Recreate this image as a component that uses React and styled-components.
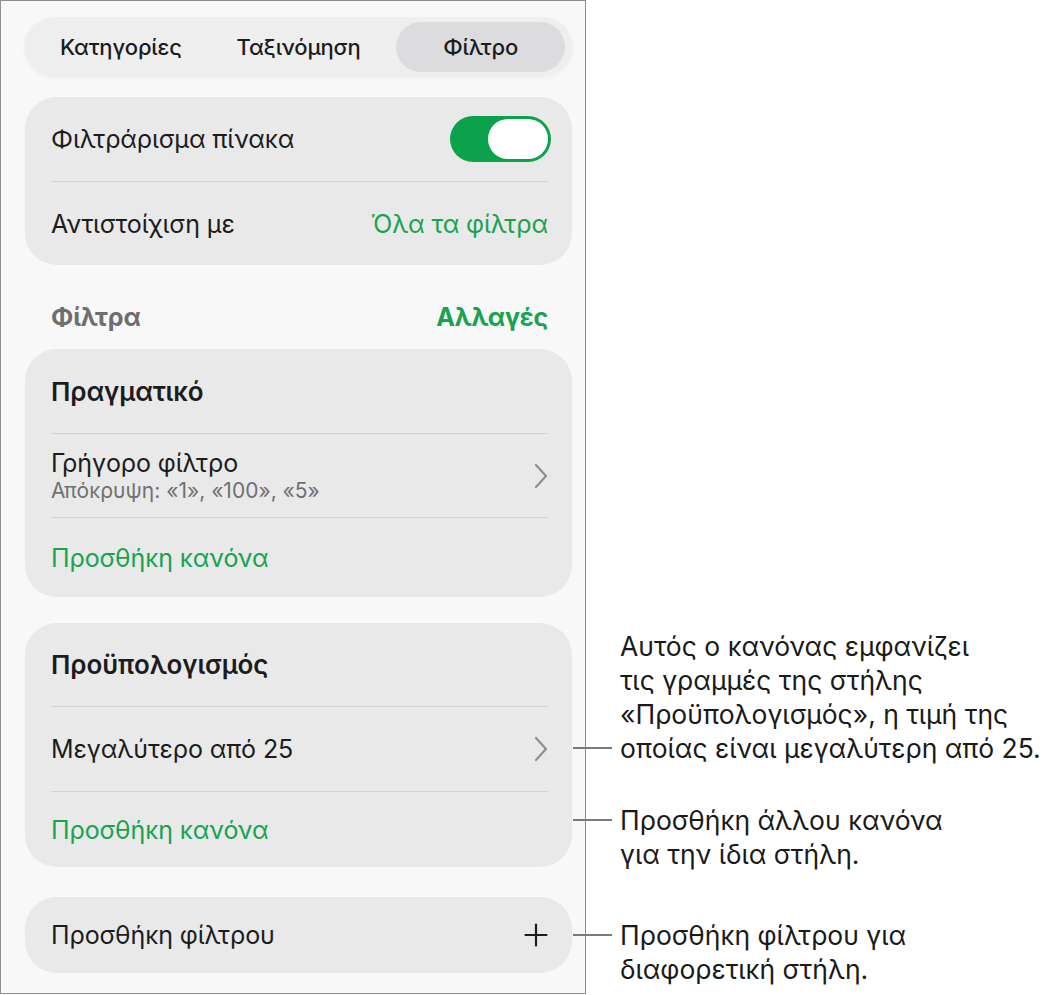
import React from 'react';
import styled, { createGlobalStyle } from 'styled-components';

const GlobalStyle = createGlobalStyle`
  body {
    margin: 0;
    background: #ffffff;
    font-family: Inter, "Noto Sans", sans-serif;
    color: #1c1c1e;
  }
`;

const GREEN = '#17a34f';

const Page = styled.div`
  display: flex;
  align-items: flex-start;
  width: 1059px;
  height: 995px;
  overflow: hidden;
`;

const Panel = styled.div`
  box-sizing: border-box;
  width: 586px;
  height: 994px;
  flex-shrink: 0;
  border: 1px solid #8e8e8e;
  background: #f8f8f8;
  padding: 17px 13px 0 24px;
  display: flex;
  flex-direction: column;
`;

const Segmented = styled.div`
  display: grid;
  grid-template-columns: 1fr 1fr 1fr;
  height: 58px;
  box-sizing: border-box;
  padding: 4px 7px;
  border-radius: 29px;
  background: #eeeeef;
  box-shadow: 0 0 0 1px #f0f0f0, 0 2px 6px rgba(0, 0, 0, 0.04);
`;

const Segment = styled.div`
  display: flex;
  align-items: center;
  justify-content: center;
  border-radius: 25px;
  font-size: 22px;
  font-weight: 500;
  letter-spacing: -0.2px;
  margin-left: ${(p) => (p.$active ? '9px' : '0')};
  background: ${(p) => (p.$active ? '#dcdcdf' : 'transparent')};
`;

const Card = styled.div`
  margin-top: ${(p) => p.$gap || 0}px;
  background: #e9e9ea;
  border-radius: 32px;
  padding: 0 24px 0 26px;
`;

const Row = styled.div`
  display: flex;
  align-items: center;
  justify-content: space-between;
  height: ${(p) => p.$h || 84}px;
  border-top: ${(p) => (p.$first ? 'none' : '1.5px solid #d3d3d5')};
  box-sizing: border-box;
`;

const Label = styled.span`
  font-size: ${(p) => (p.$bold ? 26 : 25)}px;
  letter-spacing: -0.1px;
  font-weight: ${(p) => (p.$bold ? 600 : 400)};
  color: ${(p) => (p.$green ? GREEN : '#1c1c1e')};
`;

const Stack = styled.div`
  display: flex;
  flex-direction: column;
  gap: 0;
`;

const Sub = styled.span`
  font-size: 21px;
  color: #707073;
`;

const Toggle = styled.div`
  width: 101px;
  height: 46px;
  margin-right: -3px;
  box-sizing: border-box;
  border-radius: 23px;
  background: #0ba24b;
  padding: 3px;
  display: flex;
  justify-content: flex-end;
`;

const Knob = styled.div`
  width: 60px;
  height: 40px;
  border-radius: 20px;
  background: #ffffff;
`;

const SectionHeader = styled.div`
  display: flex;
  justify-content: space-between;
  align-items: center;
  height: 48px;
  margin: 28px 24px 8px 26px;
`;

const SectionTitle = styled.span`
  font-size: 25px;
  font-weight: 700;
  letter-spacing: -0.2px;
  color: ${(p) => (p.$green ? GREEN : '#6e6e70')};
`;

const Notes = styled.div`
  display: flex;
  flex-direction: column;
  margin-left: -13px;
  padding-top: 629px;
`;

const Note = styled.div`
  display: flex;
  align-items: ${(p) => (p.$last ? 'flex-end' : 'flex-start')};
  margin-top: ${(p) => p.$gap || 0}px;
`;

const Leader = styled.div`
  width: 39px;
  height: 2px;
  background: #7a7a7a;
  flex-shrink: 0;
  margin: 16px 0;
`;

const NoteText = styled.div`
  margin-left: 8px;
  font-size: 26.5px;
  line-height: 34px;
  color: #1a1a1a;
  white-space: nowrap;
`;

const Chevron = () => (
  <svg width="14" height="26" viewBox="0 0 14 26" fill="none">
    <path d="M2 2l10 11L2 24" stroke="#8e8e93" strokeWidth="2.2" strokeLinecap="round" strokeLinejoin="round" />
  </svg>
);

const Plus = () => (
  <svg width="24" height="24" viewBox="0 0 24 24" fill="none">
    <path d="M12 1.5v21M1.5 12h21" stroke="#1c1c1e" strokeWidth="2.2" strokeLinecap="round" />
  </svg>
);

export default function App() {
  return (
    <Page>
      <GlobalStyle />
      <Panel>
        <Segmented>
          <Segment>Κατηγορίες</Segment>
          <Segment>Ταξινόμηση</Segment>
          <Segment $active>Φίλτρο</Segment>
        </Segmented>

        <Card $gap={21}>
          <Row $first>
            <Label>Φιλτράρισμα πίνακα</Label>
            <Toggle><Knob /></Toggle>
          </Row>
          <Row>
            <Label>Αντιστοίχιση με</Label>
            <Label $green>Όλα τα φίλτρα</Label>
          </Row>
        </Card>

        <SectionHeader>
          <SectionTitle>Φίλτρα</SectionTitle>
          <SectionTitle $green>Αλλαγές</SectionTitle>
        </SectionHeader>

        <Card>
          <Row $first>
            <Label $bold>Πραγματικό</Label>
          </Row>
          <Row>
            <Stack>
              <Label>Γρήγορο φίλτρο</Label>
              <Sub>Απόκρυψη: «1», «100», «5»</Sub>
            </Stack>
            <Chevron />
          </Row>
          <Row $h={80}>
            <Label $green>Προσθήκη κανόνα</Label>
          </Row>
        </Card>

        <Card $gap={26}>
          <Row $first $h={83}>
            <Label $bold>Προϋπολογισμός</Label>
          </Row>
          <Row $h={85}>
            <Label>Μεγαλύτερο από 25</Label>
            <Chevron />
          </Row>
          <Row $h={76}>
            <Label $green>Προσθήκη κανόνα</Label>
          </Row>
        </Card>

        <Card $gap={30}>
          <Row $first $h={76}>
            <Label>Προσθήκη φίλτρου</Label>
            <Plus />
          </Row>
        </Card>
      </Panel>

      <Notes>
        <Note $last>
          <Leader />
          <NoteText>
            Αυτός ο κανόνας εμφανίζει<br />
            τις γραμμές της στήλης<br />
            «Προϋπολογισμός», η τιμή της<br />
            οποίας είναι μεγαλύτερη από 25.
          </NoteText>
        </Note>
        <Note $gap={38}>
          <Leader />
          <NoteText>
            Προσθήκη άλλου κανόνα<br />
            για την ίδια στήλη.
          </NoteText>
        </Note>
        <Note $gap={47}>
          <Leader />
          <NoteText>
            Προσθήκη φίλτρου για<br />
            διαφορετική στήλη.
          </NoteText>
        </Note>
      </Notes>
    </Page>
  );
}
